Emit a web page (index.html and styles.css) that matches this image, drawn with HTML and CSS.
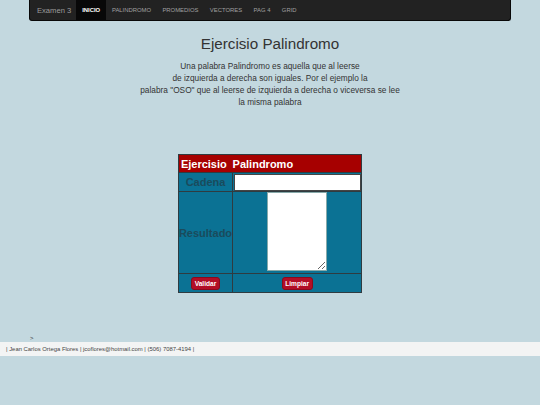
FILE: index.html
```html
<!DOCTYPE html>
<html lang="es">
<head>
<meta charset="utf-8">
<title>Ejercisio Palindromo</title>
<link rel="stylesheet" href="styles.css">
</head>
<body>
<nav class="navbar">
  <span class="brand">Examen 3</span>
  <ul class="nav">
    <li class="active"><a>INICIO</a></li>
    <li><a>PALINDROMO</a></li>
    <li><a>PROMEDIOS</a></li>
    <li><a>VECTORES</a></li>
    <li><a>PAG 4</a></li>
    <li><a>GRID</a></li>
  </ul>
</nav>
<main class="content">
  <h1 class="title">Ejercisio Palindromo</h1>
  <p class="intro">Una palabra Palindromo es aquella que al leerse<br>de izquierda a derecha son iguales. Por el ejemplo la<br>palabra "OSO" que al leerse de izquierda a derecha o viceversa se lee<br>la misma palabra</p>
  <table class="pal">
    <tr class="head">
      <th class="h1c">Ejercisio</th>
      <th class="h2c">Palindromo</th>
    </tr>
    <tr class="row-cad">
      <td class="label">Cadena</td>
      <td class="field"><input class="txt" type="text"></td>
    </tr>
    <tr class="row-res">
      <td class="label">Resultado</td>
      <td class="area-cell"><textarea class="area"></textarea></td>
    </tr>
    <tr class="row-btn">
      <td class="btn-cell"><button class="btn">Validar</button></td>
      <td class="btn-cell"><button class="btn">Limpiar</button></td>
    </tr>
  </table>
  <div class="arrow">&gt;</div>
</main>
<footer class="footer">| Jean Carlos Ortega Flores | jcoflores@hotmail.com | (506) 7087-4194 |</footer>
</body>
</html>
```

FILE: styles.css
```css
html, body {
  margin: 0;
  padding: 0;
}
body {
  background: #c3d8df;
  font-family: "Liberation Sans", Arial, sans-serif;
  color: #333;
  height: 405px;
}
.navbar {
  margin: 0 29px 0 29px;
  height: 21px;
  background: #222;
  border: 1px solid #080808;
  border-top: none;
  border-radius: 0 0 3px 3px;
  display: flex;
  align-items: stretch;
  box-sizing: border-box;
}
.brand {
  color: #9d9d9d;
  font-size: 7.6px;
  padding: 0 5px 0 7px;
  display: flex;
  align-items: center;
}
.nav {
  list-style: none;
  margin: 0;
  padding: 0;
  display: flex;
}
.nav li a {
  display: flex;
  align-items: center;
  height: 100%;
  padding: 0 5.7px;
  font-size: 5.9px;
  color: #a0a0a0;
}
.nav li.active a {
  background: #080808;
  color: #fff;
  font-weight: bold;
  padding: 0 6px;
}
.content {
  display: flex;
  flex-direction: column;
  align-items: center;
}
.title {
  font-size: 15.2px;
  font-weight: normal;
  margin: 14px 0 0 0;
  line-height: 18px;
}
.intro {
  margin: 7px 0 0 0;
  font-size: 8.3px;
  line-height: 12px;
  text-align: center;
  color: #333;
}
.pal {
  margin-top: 46px;
  border-collapse: collapse;
  width: 182px;
  background: #0b7294;
  border: 1px solid #2f3b40;
  font-family: "Liberation Sans", Arial, sans-serif;
}
.pal td {
  border: 1px solid #2f3b40;
  padding: 0;
}
.head {
  background: #a60000;
}
.head th {
  color: #fff;
  font-size: 11px;
  font-weight: bold;
  text-align: left;
  height: 17px;
  padding: 0 0 0 2px;
  border: none;
}
.h1c {
  width: 49px;
}
.h2c {
  padding-left: 0 !important;
}
.label {
  color: #1a4b5c;
  font-weight: bold;
  font-size: 11px;
  text-align: center;
}
.row-cad td {
  height: 18px;
}
.field {
  padding: 0 !important;
}
.txt {
  display: block;
  width: 127px;
  height: 17px;
  margin: 0 0 0 1px;
  border: 1px solid #444;
  background: #fff;
  box-sizing: border-box;
  padding: 0;
}
.row-res td {
  height: 81px;
}
.area-cell {
  text-align: center;
  vertical-align: top;
}
.area {
  display: block;
  margin: 0 auto;
  width: 60px;
  height: 79px;
  border: 1px solid #8aa;
  background: #fff;
  box-sizing: border-box;
  padding: 0;
}
.row-btn td {
  height: 18px;
  text-align: center;
}
.btn {
  background: #b20e26;
  color: #fff;
  font-family: "Liberation Sans", Arial, sans-serif;
  font-weight: bold;
  font-size: 6.6px;
  border: 1px solid #8a0a1c;
  border-radius: 3px;
  padding: 0 2.5px;
  height: 13px;
  line-height: 11px;
  vertical-align: middle;
}
.arrow {
  align-self: flex-start;
  margin: 41px 0 0 30px;
  font-size: 6px;
  line-height: 8px;
  color: #333;
}
.footer {
  background: #f3f4f4;
  font-size: 5.9px;
  color: #444;
  height: 14px;
  line-height: 14px;
  padding-left: 6px;
  margin-top: 0;
}
```
